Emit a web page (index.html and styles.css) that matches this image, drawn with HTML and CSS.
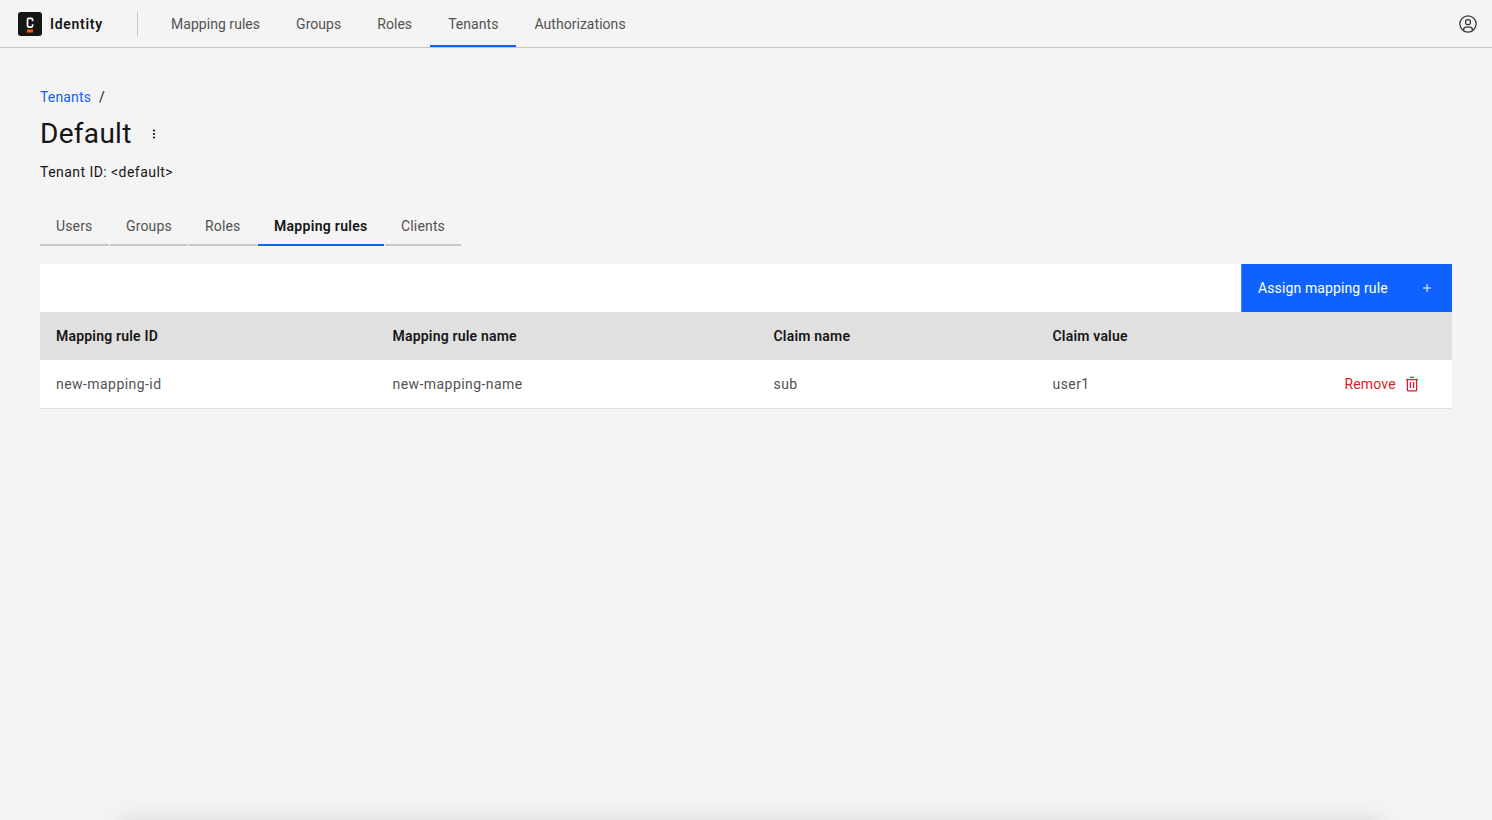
FILE: index.html
```html
<!DOCTYPE html>
<html lang="en">
<head>
<meta charset="utf-8">
<title>Identity</title>
<link rel="stylesheet" href="styles.css">
</head>
<body>
<header class="topbar">
  <div class="brand">
    <svg class="logo" width="24" height="24" viewBox="0 0 24 24" aria-hidden="true">
      <rect width="24" height="24" rx="3" fill="#161616"/>
      <path d="M14.6 9.2V7.6c0-.9-.5-1.3-1.3-1.3h-2.5c-.8 0-1.3.4-1.3 1.3v6.2c0 .9.5 1.3 1.3 1.3h2.5c.8 0 1.3-.4 1.3-1.3v-1.6" fill="none" stroke="#fff" stroke-width="1.7"/>
      <rect x="9" y="17.5" width="6" height="3" fill="#fc5d0d"/>
    </svg>
    <span class="brand-name">Identity</span>
  </div>
  <nav class="topnav">
    <a class="topnav-item">Mapping rules</a>
    <a class="topnav-item">Groups</a>
    <a class="topnav-item">Roles</a>
    <a class="topnav-item is-active">Tenants</a>
    <a class="topnav-item">Authorizations</a>
  </nav>
  <svg class="user-icon" width="20" height="20" viewBox="0 0 32 32" fill="#393939" aria-hidden="true">
    <path d="M16 8a5 5 0 1 0 5 5 5 5 0 0 0-5-5zm0 8a3 3 0 1 1 3-3 3 3 0 0 1-3 3z"/>
    <path d="M16 2a14 14 0 1 0 14 14A14 14 0 0 0 16 2zm-6 24.38V25a3 3 0 0 1 3-3h6a3 3 0 0 1 3 3v1.38a11.89 11.89 0 0 1-12 0zm14-1.45V25a5 5 0 0 0-5-5h-6a5 5 0 0 0-5 5v-.07a12 12 0 1 1 16 0z"/>
  </svg>
</header>

<main class="page">
  <div class="breadcrumb"><a class="crumb-link">Tenants</a><span class="crumb-sep">/</span></div>
  <div class="title-row">
    <h1 class="title">Default</h1>
    <svg class="overflow" width="16" height="16" viewBox="0 0 16 16" fill="#161616" aria-hidden="true">
      <circle cx="8" cy="4.5" r="1.1"/><circle cx="8" cy="8" r="1.1"/><circle cx="8" cy="11.5" r="1.1"/>
    </svg>
  </div>
  <p class="tenant-id">Tenant ID: &lt;default&gt;</p>

  <div class="tabs">
    <a class="tab tab-users">Users</a>
    <a class="tab tab-groups">Groups</a>
    <a class="tab tab-roles">Roles</a>
    <a class="tab tab-mapping is-selected">Mapping rules</a>
    <a class="tab tab-clients">Clients</a>
  </div>

  <section class="table-wrap">
    <div class="toolbar">
      <button class="primary-btn"><span>Assign mapping rule</span>
        <svg width="16" height="16" viewBox="0 0 16 16" fill="#fff" aria-hidden="true"><path d="M8.5 4h-1v3.5H4v1h3.5V12h1V8.5H12v-1H8.5z"/></svg>
      </button>
    </div>
    <div class="row row-head">
      <div>Mapping rule ID</div><div>Mapping rule name</div><div>Claim name</div><div>Claim value</div><div></div>
    </div>
    <div class="row row-body">
      <div>new-mapping-id</div><div>new-mapping-name</div><div>sub</div><div>user1</div>
      <div class="remove-cell"><span class="remove">Remove</span>
        <svg class="trash" width="16" height="16" viewBox="0 0 16 16" fill="none" stroke="#da1e28" stroke-width="1.3" aria-hidden="true">
          <path d="M2 3.6h12M3.4 3.6v10.4a.8.8 0 0 0 .8.8h7.6a.8.8 0 0 0 .8-.8V3.6M6 1.3h4M6.4 6v6M9.6 6v6"/>
        </svg>
      </div>
    </div>
  </section>
</main>
<div class="bottom-shadow"></div>
</body>
</html>
```
FILE: styles.css
```css
* { box-sizing: border-box; }
html, body { margin: 0; height: 100%; }
body {
  background: #f4f4f4;
  color: #161616;
  font-family: Roboto, "Liberation Sans", sans-serif;
  font-size: 14px;
  letter-spacing: 0.16px;
  overflow: hidden;
}
.topbar {
  display: flex;
  align-items: stretch;
  height: 48px;
  border-bottom: 1px solid #c6c6c6;
}
.brand {
  display: flex;
  align-items: center;
  padding-left: 18px;
  width: 138px;
  position: relative;
}
.brand::after {
  content: "";
  position: absolute;
  right: 0;
  top: 12px;
  height: 24px;
  width: 1px;
  background: #c6c6c6;
}
.logo { flex: none; }
.brand-name { margin-left: 8px; font-weight: 600; white-space: nowrap; letter-spacing: 0.7px; }
.topnav { display: flex; margin-left: 15px; height: 47px; letter-spacing: 0.04px; }
.topnav-item {
  display: flex;
  align-items: center;
  padding: 2px 18px 0;
  color: #525252;
  border-bottom: 2px solid transparent;
  white-space: nowrap;
}
.topnav-item.is-active { border-bottom-color: #0f62fe; }
.user-icon { margin: 14px 14px 0 auto; }
.page { padding: 40px 40px 0; }
.breadcrumb { display: flex; height: 18px; line-height: 18px; }
.crumb-link { color: #0f62fe; }
.crumb-sep { margin-left: 8px; }
.title-row { display: flex; align-items: center; margin-top: 8px; height: 40px; }
.title { margin: 0; font-size: 28px; font-weight: 400; line-height: 36px; letter-spacing: 0.3px; }
.overflow { margin-left: 14px; }
.tenant-id { margin: 9px 0 0; line-height: 18px; letter-spacing: 0.45px; }
.tabs { display: flex; gap: 1px; margin-top: 25px; height: 40px; }
.tab {
  display: flex;
  align-items: center;
  padding: 2px 16px 0;
  color: #525252;
  border-bottom: 2px solid #c6c6c6;
  white-space: nowrap;
}
.tab-users { width: 69px; }
.tab-groups { width: 78px; }
.tab-roles { width: 68px; }
.tab-mapping { width: 126px; }
.tab-clients { width: 76px; }
.tab.is-selected { color: #161616; font-weight: 600; letter-spacing: 0.3px; border-bottom-color: #0f62fe; }
.table-wrap { margin-top: 18px; }
.toolbar { display: flex; justify-content: flex-end; background: #fff; height: 48px; }
.primary-btn {
  display: flex;
  align-items: center;
  justify-content: space-between;
  width: 211px;
  height: 48px;
  padding: 0 17px 0 16px;
  border: 0;
  border-left: 1px solid #4589ff;
  background: #0f62fe;
  color: #fff;
  font: inherit;
  letter-spacing: 0.12px;
}
.row {
  display: grid;
  grid-template-columns: 336.5px 381px 279px 1fr 140px;
  align-items: center;
  height: 48px;
  padding-left: 16px;
}
.row-head { background: #e0e0e0; font-weight: 600; letter-spacing: 0.2px; }
.row-body { background: #fff; color: #525252; height: 49px; border-bottom: 1px solid #e0e0e0; letter-spacing: 0.44px; }
.remove-cell { display: flex; align-items: center; color: #da1e28; gap: 8px; padding-left: 32.5px; letter-spacing: 0.16px; }
.trash { margin-top: -1px; }
.bottom-shadow {
  position: fixed;
  left: 120px;
  right: 110px;
  top: 826px;
  height: 40px;
  box-shadow: 0 0 28px rgba(0, 0, 0, 0.2);
}
```
